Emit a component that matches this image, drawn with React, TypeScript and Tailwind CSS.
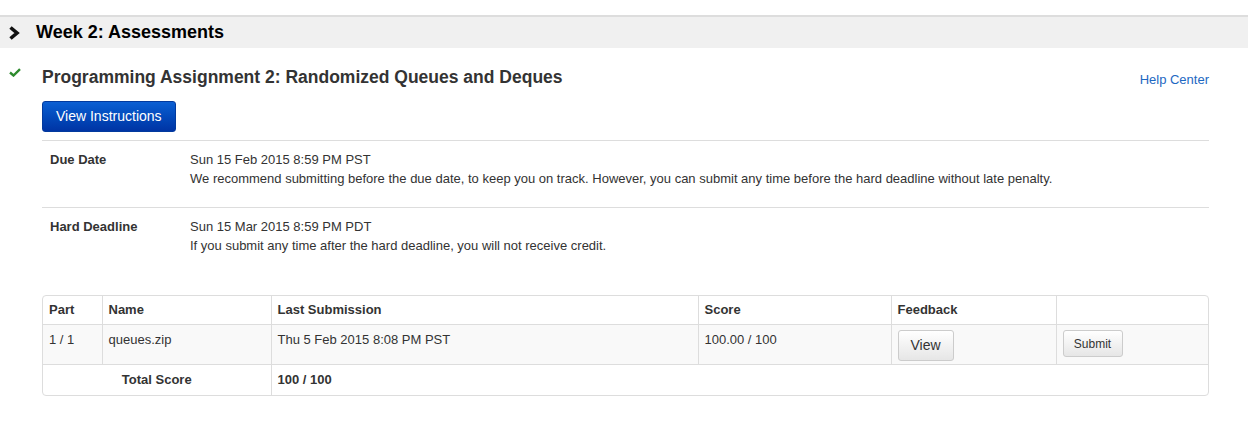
import React from 'react';

const font = "font-['Liberation_Sans',Arial,sans-serif]";

const App: React.FC = () => {
    const cell = 'border-r border-[#dddddd] px-[6px]';

    return (
        <div className={`w-[1256px] h-[431px] bg-white text-[#333333] ${font}`}>
            <div className="pt-[15px] w-[1248px]">
                <div className="h-[33px] border-t-2 border-[#dddddd] bg-[#f0f0f0] flex items-center">
                    <svg className="ml-[8px] w-[13px] h-[14px]" viewBox="0 0 13 14">
                        <path d="M2.5 1.5 L9 7 L2.5 12.5" fill="none" stroke="#111" strokeWidth="3.6" />
                    </svg>
                    <span className="ml-[15px] text-[18px] font-bold text-black">Week 2: Assessments</span>
                </div>
            </div>

            <div className="flex pt-[18px]">
                <div className="w-[42px] pl-[9px] pt-[2px]">
                    <svg className="w-[12px] h-[9px]" viewBox="0 0 12 9">
                        <path d="M1 4.5 L4.5 7.5 L11 1.2" fill="none" stroke="#2e8b2e" strokeWidth="2.4" />
                    </svg>
                </div>
                <div className="w-[1167px]">
                    <div className="flex items-start justify-between">
                        <h2 className="text-[17.5px] font-bold leading-[20px] pt-[1px]">
                            Programming Assignment 2: Randomized Queues and Deques
                        </h2>
                        <a className="text-[13px] text-[#1d68c2] pt-[4px]">Help Center</a>
                    </div>
                    <button className="mt-[11px] h-[31px] px-[13px] rounded-[3px] border border-[#023a9e] bg-gradient-to-b from-[#0c5fd3] to-[#0034a4] text-white text-[14px]">
                        View Instructions
                    </button>

                    <div className="mt-[8px] border-t border-[#dddddd]">
                        <div className="flex pt-[9px] pb-[19px] text-[13px] leading-[19px]">
                            <div className="w-[148px] pl-[8px] font-bold">Due Date</div>
                            <div>
                                <div>Sun 15 Feb 2015 8:59 PM PST</div>
                                <div>We recommend submitting before the due date, to keep you on track. However, you can submit any time before the hard deadline without late penalty.</div>
                            </div>
                        </div>
                        <div className="flex border-t border-[#dddddd] pt-[9px] text-[13px] leading-[19px]">
                            <div className="w-[148px] pl-[8px] font-bold">Hard Deadline</div>
                            <div>
                                <div>Sun 15 Mar 2015 8:59 PM PDT</div>
                                <div>If you submit any time after the hard deadline, you will not receive credit.</div>
                            </div>
                        </div>
                    </div>

                    <div className="mt-[40px] border border-[#dddddd] rounded-[4px] overflow-hidden">
                        <table className="w-full border-collapse text-[13px]">
                            <thead>
                                <tr className="h-[29px] text-left font-bold">
                                    <th className={`${cell} w-[59px] align-middle`}>Part</th>
                                    <th className={`${cell} w-[169px] align-middle`}>Name</th>
                                    <th className={`${cell} w-[427px] align-middle`}>Last Submission</th>
                                    <th className={`${cell} w-[193px] align-middle`}>Score</th>
                                    <th className={`${cell} w-[165px] align-middle`}>Feedback</th>
                                    <th className="px-[6px]"></th>
                                </tr>
                            </thead>
                            <tbody>
                                <tr className="h-[40px] bg-[#f9f9f9] border-t border-[#dddddd]">
                                    <td className={`${cell} align-top pt-[5px]`}>1 / 1</td>
                                    <td className={`${cell} align-top pt-[5px]`}>queues.zip</td>
                                    <td className={`${cell} align-top pt-[5px]`}>Thu 5 Feb 2015 8:08 PM PST</td>
                                    <td className={`${cell} align-top pt-[5px]`}>100.00 / 100</td>
                                    <td className={`${cell} align-top pt-[5px]`}>
                                        <button className="h-[31px] w-[56px] rounded-[3px] border border-[#cccccc] bg-gradient-to-b from-white to-[#e6e6e6] text-[14px] text-[#333]">
                                            View
                                        </button>
                                    </td>
                                    <td className="px-[6px] align-top pt-[5px]">
                                        <button className="h-[27px] w-[60px] rounded-[3px] border border-[#cccccc] bg-gradient-to-b from-white to-[#e6e6e6] text-[12px] text-[#333]">
                                            Submit
                                        </button>
                                    </td>
                                </tr>
                                <tr className="h-[30px] border-t border-[#dddddd] font-bold">
                                    <td colSpan={2} className={`${cell} text-center align-middle`}>Total Score</td>
                                    <td colSpan={4} className="px-[6px] align-middle">100 / 100</td>
                                </tr>
                            </tbody>
                        </table>
                    </div>
                </div>
            </div>
        </div>
    );
};

export default App;
